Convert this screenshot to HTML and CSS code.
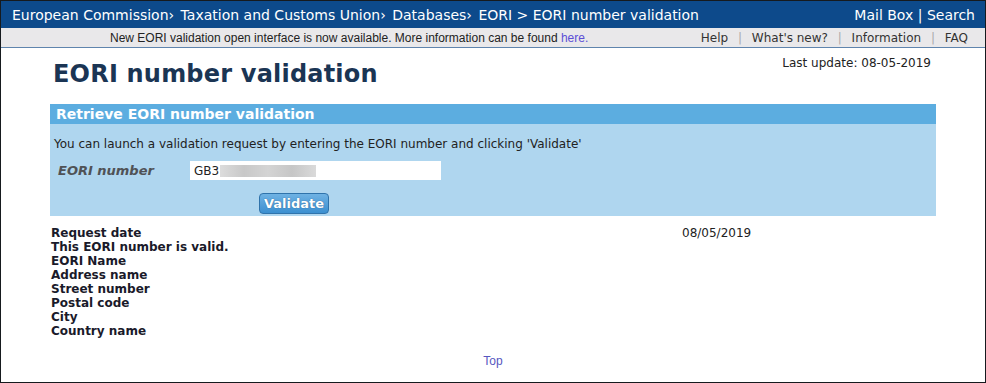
FILE: index.html
```html
<!DOCTYPE html>
<html lang="en">
<head>
  <meta charset="UTF-8">
  <title>EORI number validation</title>
  <link rel="stylesheet" href="styles.css">
</head>
<body>
  <div class="frame">
    <div class="topbar">
      <div class="crumbs">European Commission<span class="sep">›</span> Taxation and Customs Union<span class="sep">›</span> Databases<span class="sep">›</span> EORI &gt; EORI number validation</div>
      <div class="tools">Mail Box | Search</div>
    </div>
    <div class="infobar">
      <div class="notice">New EORI validation open interface is now available. More information can be found <a href="#">here.</a></div>
      <div class="links">Help <span class="pipe">|</span> What's new? <span class="pipe">|</span> Information <span class="pipe">|</span> FAQ</div>
    </div>

    <div class="content">
      <div class="titlerow">
        <h1>EORI number validation</h1>
        <div class="updated">Last update: 08-05-2019</div>
      </div>

      <div class="panel">
        <div class="panel-head">Retrieve EORI number validation</div>
        <div class="panel-body">
          <p class="hint">You can launch a validation request by entering the EORI number and clicking 'Validate'</p>
          <div class="field">
            <label for="eori">EORI number</label>
            <div class="input"><span>GB3</span><span class="blur"></span></div>
          </div>
          <div class="actions"><button class="btn">Validate</button></div>
        </div>
      </div>

      <div class="results">
        <div class="labels">
          <div>Request date</div>
          <div>This EORI number is valid.</div>
          <div>EORI Name</div>
          <div>Address name</div>
          <div>Street number</div>
          <div>Postal code</div>
          <div>City</div>
          <div>Country name</div>
        </div>
        <div class="values">08/05/2019</div>
      </div>

      <div class="toplink"><a href="#">Top</a></div>
    </div>
  </div>
</body>
</html>
```

FILE: styles.css
```css
body {
  margin: 0;
  font-family: "DejaVu Sans", Verdana, sans-serif;
  background: #fff;
}
.frame {
  border: 1px solid #161a1e;
  box-sizing: border-box;
  height: 383px;
  overflow: hidden;
}
.topbar {
  background: #0d4a8b;
  color: #fff;
  height: 27px;
  display: flex;
  justify-content: space-between;
  align-items: center;
  padding: 0 10px 0 11px;
  font-size: 14px;
  white-space: nowrap;
}
.crumbs .sep {
  margin-right: 2px;
}
.infobar {
  background: #e9e8ea;
  border-bottom: 1px solid #5f84ad;
  height: 19px;
  display: flex;
  align-items: center;
  padding-right: 17px;
  white-space: nowrap;
}
.notice {
  font-family: "Liberation Sans", Arial, sans-serif;
  font-size: 12px;
  color: #222;
  padding-left: 109px;
  flex: 1;
}
.notice a {
  color: #5c4fd6;
  text-decoration: none;
}
.links {
  font-size: 12px;
  color: #333;
}
.links .pipe {
  color: #aaa;
  margin: 0 6px;
}
.content {
  padding: 0 49px 0 49px;
}
.titlerow {
  display: flex;
  justify-content: space-between;
  align-items: flex-start;
  height: 56px;
}
h1 {
  margin: 12px 0 0 3px;
  font-size: 24px;
  color: #1b3554;
  letter-spacing: 0.2px;
}
.updated {
  font-size: 12px;
  color: #222;
  margin: 8px 5px 0 0;
}
.panel {
  background: #afd6ef;
}
.panel-head {
  background: #5cade0;
  color: #fff;
  font-weight: bold;
  font-size: 14px;
  height: 20px;
  line-height: 21px;
  padding-left: 6px;
}
.hint {
  margin: 0;
  padding: 13px 0 0 4px;
  font-size: 12px;
  color: #222;
}
.field {
  display: flex;
  align-items: center;
  margin-top: 10px;
}
.field label {
  font-weight: bold;
  font-style: italic;
  font-size: 13px;
  color: #4f5256;
  width: 132px;
  padding-left: 8px;
}
.input {
  background: #fff;
  width: 247px;
  height: 19px;
  display: flex;
  align-items: center;
  padding-left: 4px;
  font-size: 12px;
  color: #222;
}
.blur {
  width: 96px;
  height: 12px;
  margin-left: 1px;
  background: linear-gradient(90deg, #dcdcdc, #c8c8c8, #d4d4d4, #c6c6c6, #dadada);
}
.actions {
  padding: 13px 0 2px 209px;
}
.btn {
  font-family: inherit;
  font-weight: bold;
  font-size: 13px;
  color: #fff;
  background: linear-gradient(#6fb2e3, #3b8fd0);
  border: 1px solid #2f73ab;
  border-radius: 4px;
  height: 21px;
  padding: 0 4px;
  text-shadow: 0 0 1px #205080;
}
.results {
  display: flex;
  margin-top: 10px;
  padding-left: 1px;
}
.labels {
  font-weight: bold;
  font-size: 12px;
  line-height: 14px;
  color: #1a1a2a;
  width: 631px;
}
.values {
  font-size: 12px;
  line-height: 14px;
  color: #222;
}
.toplink {
  text-align: center;
  font-family: "Liberation Sans", Arial, sans-serif;
  font-size: 12px;
  margin-top: 16px;
}
.toplink a {
  color: #5757c0;
  text-decoration: none;
}
```
